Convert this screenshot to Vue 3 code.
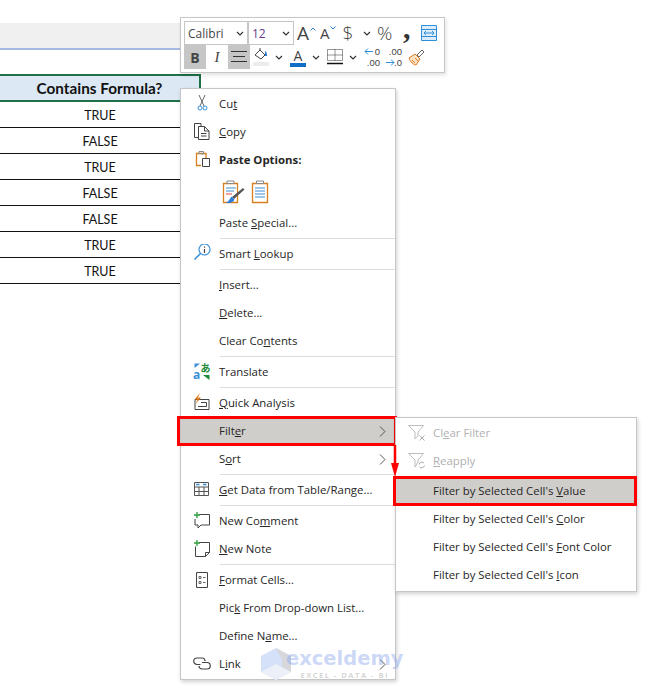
<script setup>
const rows = ['TRUE', 'FALSE', 'TRUE', 'FALSE', 'FALSE', 'TRUE', 'TRUE']

const ORANGE = '#d9801e'
const BLUE = '#3a8fd6'
const DARK = '#444'
const GREEN = '#2e9e3f'

// each part: path d, stroke, fill (or t for a text label)
const icons = {
  cut: [
    { d: 'M7 1l5 11M13 1L8 12', s: '#666' },
    { d: 'M6 14a2 2 0 1 0 4 0a2 2 0 1 0-4 0zM11 14a2 2 0 1 0 4 0a2 2 0 1 0-4 0z', s: BLUE }
  ],
  copy: [
    { d: 'M6 15.500H2.500V1.500h6.500v2.500', s: DARK },
    { d: 'M6.500 4.500h6l4.500 4.500v8.500H6.500zM12.500 4.500v4.500H17M9 11.500h5.500M9 14h5.500', s: DARK }
  ],
  paste: [
    { d: 'M9 15.500H4.500V3.500h9.500v5', s: ORANGE, w: 1.300 },
    { d: 'M7 3.500V1.500h4.500v2.500z', s: '#888' },
    { d: 'M10.500 8.500h7v8h-7z', s: DARK, f: '#fff' }
  ],
  lookup: [
    { d: 'M7 5.500a5.500 5.500 0 1 0 11 0a5.500 5.500 0 1 0-11 0z', s: BLUE, w: 1.200 },
    { d: 'M8.500 9.500L2.500 15.500', s: BLUE, w: 1.600 },
    { d: 'M12.500 5v4M12.500 2.500v1.300', s: DARK, w: 1.200 }
  ],
  translate: [
    { d: 'M8 1.500H2.500v4.500zM2 1.500l4 4', f: BLUE },
    { d: 'M11 13h6.500v5zM17.500 18l-4-4', f: '#1d8a3a' },
    { t: 'a', x: 1, y: 17, c: BLUE, z: 12 },
    { t: 'あ', x: 8.500, y: 10, c: '#1d8a3a', z: 10 }
  ],
  quick: [
    { d: 'M3 6.500h14v10H3zM9 9.500h5.500v4H6', s: DARK },
    { d: 'M8 0L2.500 6.500h3L3.500 11 9 4.500H6z', f: '#e87d1e' }
  ],
  table: [
    { d: 'M2.500 2.500h14v13h-14zM2.500 7h14M2.500 11.500h14M7 7v8.500M12 7v8.500', s: '#555' },
    { d: 'M4 4.500h3.500M11 4.500h3.500', s: BLUE, w: 1.500 }
  ],
  comment: [
    { d: 'M7 3.500h10.500v10.500H9l-3 3v-3H3v-6', s: DARK },
    { d: 'M5 1v6M2 4h6', s: GREEN, w: 1.300 }
  ],
  note: [
    { d: 'M7 3.500h10.500v10l-4 4h-10v-10M17.500 13.500h-4v4', s: DARK },
    { d: 'M5 1v6M2 4h6', s: GREEN, w: 1.300 }
  ],
  format: [
    { d: 'M4.500 2.500h11v15h-11z', s: DARK },
    { d: 'M7 6.500h2v2H7zM7 11.500h2v2H7zM11 7.500h2.500M11 12.500h2.500', s: '#666' }
  ],
  link: [
    { d: 'M8.500 10.500H5a3.250 3.250 0 0 1 0-6.500h5a3 3 0 0 1 3 3', s: DARK, w: 1.200 },
    { d: 'M10 8.500h5a3.250 3.250 0 0 1 0 6.500h-5a3 3 0 0 1-3-3', s: DARK, w: 1.200 }
  ],
  clearFilter: [
    { d: 'M1.500 2.500h15l-5.500 6.500v4l-3 3V9z', s: '#bdbdbd' },
    { d: 'M12.500 12.500l5 5M17.500 12.500l-5 5', s: '#a8a8a8' }
  ],
  reapply: [
    { d: 'M1.500 2.500h15l-5.500 6.500v2l-3 5V9z', s: '#bdbdbd' },
    { d: 'M12 13.500a3 3 0 0 1 5-1.500M17.500 14.500a3 3 0 0 1-5 1.500', s: '#a8a8a8' }
  ]
}

const L = (a, u, b = '') => ({ a, u, b })

const menu = [
  { ...L('Cu', 't'), icon: 'cut' },
  { ...L('', 'C', 'opy'), icon: 'copy' },
  { ...L('Paste Options:', ''), icon: 'paste', kind: 'head' },
  { kind: 'paste-row' },
  L('Paste ', 'S', 'pecial...'),
  { sep: true },
  { ...L('Smart ', 'L', 'ookup'), icon: 'lookup' },
  { sep: true },
  L('', 'I', 'nsert...'),
  L('', 'D', 'elete...'),
  L('Clear Co', 'n', 'tents'),
  { sep: true },
  { ...L('Translate', ''), icon: 'translate' },
  { sep: true },
  { ...L('', 'Q', 'uick Analysis'), icon: 'quick' },
  { ...L('Filt', 'e', 'r'), more: true, kind: 'boxed' },
  { ...L('S', 'o', 'rt'), more: true },
  { sep: true },
  { ...L('', 'G', 'et Data from Table/Range...'), icon: 'table' },
  { sep: true },
  { ...L('New Co', 'm', 'ment'), icon: 'comment' },
  { ...L('', 'N', 'ew Note'), icon: 'note' },
  { sep: true },
  { ...L('', 'F', 'ormat Cells...'), icon: 'format' },
  L('Pic', 'k', ' From Drop-down List...'),
  L('Define N', 'a', 'me...'),
  { ...L('L', 'i', 'nk'), icon: 'link', more: true }
]

const submenu = [
  { ...L('Cl', 'e', 'ar Filter'), icon: 'clearFilter', kind: 'off' },
  { ...L('', 'R', 'eapply'), icon: 'reapply', kind: 'off' },
  { gap: true },
  { ...L("Filter by Selected Cell's ", 'V', 'alue'), kind: 'boxed' },
  L("Filter by Selected Cell's ", 'C', 'olor'),
  L("Filter by Selected Cell's ", 'F', 'ont Color'),
  L("Filter by Selected Cell's ", 'I', 'con')
]
</script>

<template>
  <div class="sheet">
    <div class="ribbon-bar"></div>
    <table class="data">
      <thead>
        <tr><th>Contains Formula?</th></tr>
      </thead>
      <tbody>
        <tr v-for="(r, i) in rows" :key="i"><td>{{ r }}</td></tr>
      </tbody>
    </table>

    <!-- mini toolbar -->
    <div class="toolbar">
      <div class="tb-row">
        <div class="combo font-box"><span>Calibri</span><svg class="chev" viewBox="0 0 8 5"><path d="M1 1l3 3 3-3" /></svg></div>
        <div class="combo size-box"><span class="size">12</span><svg class="chev" viewBox="0 0 8 5"><path d="M1 1l3 3 3-3" /></svg></div>
        <span class="g-a big">A
          <svg class="caret" viewBox="0 0 6 4"><path d="M.5 3.500L3 1l2.500 2.500" /></svg>
        </span>
        <span class="g-a small">A
          <svg class="caret" viewBox="0 0 6 4"><path d="M.5.500L3 3 5.500.500" /></svg>
        </span>
        <span class="g-dollar">$</span>
        <svg class="chev solo" viewBox="0 0 8 5"><path d="M1 1l3 3 3-3" /></svg>
        <span class="g-pct">%</span>
        <span class="g-comma">,</span>
        <svg class="wrap" viewBox="0 0 16 16">
          <path d="M.5.500h15v15H.5z" fill="#dcecf9" stroke="#2f8fd8" />
          <path d="M.5 4.500h15M.5 11.500h15" stroke="#2f8fd8" fill="none" />
          <path d="M3 8h10M5 6L3 8l2 2M11 6l2 2-2 2" stroke="#2f8fd8" fill="none" />
        </svg>
      </div>
      <div class="tb-row second">
        <span class="btn on b">B</span>
        <span class="btn i">I</span>
        <span class="btn on">
          <svg width="16" height="14" viewBox="0 0 16 14"><path d="M0 1.500h16M2 6.500h12M0 11.500h16" stroke="#333" fill="none" /></svg>
        </span>
        <svg class="bucket" viewBox="0 0 16 20">
          <path d="M2 8l5-5 5 5-4 4z" fill="#fff" stroke="#444" />
          <path d="M7 1v3" stroke="#444" />
          <path d="M12 4c2 1 2 3 2 5h-2z" fill="#2f7ed8" />
          <path d="M0 15h16v4H0z" fill="#ececec" />
        </svg>
        <svg class="chev c1" viewBox="0 0 8 5"><path d="M1 1l3 3 3-3" /></svg>
        <span class="font-a">A</span>
        <svg class="chev c2" viewBox="0 0 8 5"><path d="M1 1l3 3 3-3" /></svg>
        <svg class="borders" viewBox="0 0 16 17">
          <path d="M.5.500h15v11H.5zM8 .5v11M.5 6h15" stroke="#333" stroke-dasharray="1 1" fill="none" />
          <path d="M0 14.500h16" stroke="#111" stroke-width="1.500" />
        </svg>
        <svg class="chev c3" viewBox="0 0 8 5"><path d="M1 1l3 3 3-3" /></svg>
        <span class="decimals dec">
          <span class="dec-top">0</span>
          <span>.00</span>
          <svg class="dec-arrow" viewBox="0 0 9 7"><path d="M9 3.500H1M4 .5l-3 3 3 3" /></svg>
        </span>
        <span class="decimals inc">
          <span>.00</span>
          <span>.0</span>
          <svg class="dec-arrow low" viewBox="0 0 9 7"><path d="M0 3.500h8M5 .5l3 3-3 3" /></svg>
        </span>
        <svg class="brush" viewBox="0 0 17 17">
          <path d="M1 9l6-4 5 5-4 6c-2 0-6-3-7-7z" fill="#fbe3c7" stroke="#e07b1a" />
          <path d="M4 11l3 3M7 9l3 3" stroke="#e07b1a" />
          <path d="M9 6l5-5 2 2-5 5z" fill="#fff" stroke="#666" />
        </svg>
      </div>
    </div>

    <!-- context menu -->
    <div class="menu">
      <template v-for="(m, i) in menu" :key="i">
        <div v-if="m.sep" class="sep"></div>
        <div v-else-if="m.kind === 'paste-row'" class="paste-row">
          <svg width="24" height="24" viewBox="0 0 24 24">
            <path d="M2.500 3.500h14v19h-14z" fill="#fff" stroke="#d9801e" stroke-width="1.300" />
            <path d="M6 3.500V1h7v2.500z" fill="#fff" stroke="#888" />
            <path d="M5 8h10M5 11h8" stroke="#3a8fd6" />
            <path d="M5 14h6" stroke="#e0453a" />
            <path d="M22 8l1.500 1.500L13 19l-2-2z" fill="#555" />
            <path d="M10.500 16.500l3 3c-1 3-5 4-9 3.500 3-1 4-4 6-6.500z" fill="#2f7ed8" />
          </svg>
          <svg width="18" height="24" viewBox="0 0 18 24">
            <path d="M1.500 3.500h15v19h-15z" fill="#fff" stroke="#d9801e" stroke-width="1.300" />
            <path d="M5.500 3.500V1h7v2.500z" fill="#fff" stroke="#888" />
            <path d="M4 8h10M4 11h10M4 14h10M4 17h10" stroke="#3a8fd6" />
          </svg>
        </div>
        <div v-else class="item" :class="m.kind">
          <svg v-if="m.icon" class="ico" viewBox="0 0 20 20">
            <template v-for="(p, j) in icons[m.icon]" :key="j">
              <text v-if="p.t" :x="p.x" :y="p.y" :fill="p.c" :font-size="p.z" class="ico-text">{{ p.t }}</text>
              <path v-else :d="p.d" :stroke="p.s || 'none'" :fill="p.f || 'none'" :stroke-width="p.w || 1" />
            </template>
          </svg>
          <span class="label">{{ m.a }}<u>{{ m.u }}</u>{{ m.b }}</span>
          <svg v-if="m.more" class="more" viewBox="0 0 7 11"><path d="M1 .5l5 5-5 5" /></svg>
        </div>
      </template>
    </div>

    <div class="submenu">
      <template v-for="(m, i) in submenu" :key="i">
        <div v-if="m.gap" class="sub-gap"></div>
        <div v-else class="item" :class="m.kind">
          <svg v-if="m.icon" class="ico" viewBox="0 0 20 20">
            <path v-for="(p, j) in icons[m.icon]" :key="j" :d="p.d" :stroke="p.s" fill="none" />
          </svg>
          <span class="label">{{ m.a }}<u>{{ m.u }}</u>{{ m.b }}</span>
        </div>
      </template>
    </div>

    <!-- red arrow from Filter to the sub item -->
    <svg class="arrow" width="10" height="33" viewBox="0 0 10 33">
      <path d="M5 0v19" stroke="#f00" stroke-width="2.500" />
      <path d="M1 18h8l-4 14z" fill="#f00" />
    </svg>

    <div class="watermark">
      <svg width="32" height="34" viewBox="0 0 32 34">
        <path d="M16 1L1 9v16l15 8 15-8V9z" fill="#d5e1f8" />
        <path d="M16 1l15 8v16l-9-5V13z" fill="#d8d8dc" />
        <path d="M1 25l15-8 15 8-15 8z" fill="#ecf1f9" />
      </svg>
      <div class="wm-text">
        <span class="wm-name">exceldemy</span>
        <span class="wm-tag">EXCEL - DATA - BI</span>
      </div>
    </div>
  </div>
</template>

<style scoped>
.sheet {
  position: relative;
  width: 664px;
  height: 694px;
  padding-top: 23px;
  box-sizing: border-box;
  background: #fff;
  overflow: hidden;
  font-family: "Open Sans", "Noto Sans", sans-serif;
  color: #262626;
}
.ribbon-bar {
  width: 200px;
  height: 25px;
  background: #f0f0f0;
  border-bottom: 2px solid #a6b9e2;
}
.data {
  width: 201px;
  margin-top: 24px;
  border-collapse: collapse;
  font-family: Lato, "Open Sans", sans-serif;
  color: #111;
}
.data th {
  height: 24px;
  padding: 0;
  background: #dce9f5;
  border: 2px solid #1f6f47;
  border-left: none;
  font-size: 15.300px;
  font-weight: 700;
  line-height: 18px;
  text-align: center;
}
.data td {
  height: 24px;
  padding: 1px 0 0;
  border-bottom: 1px solid #111;
  font-size: 12.500px;
  text-align: center;
}

.toolbar {
  position: absolute;
  left: 180px;
  top: 17px;
  width: 265px;
  height: 56px;
  padding: 3px 3px 0;
  box-sizing: border-box;
  background: #fff;
  border: 1px solid #c6c6c6;
  box-shadow: 1px 2px 4px rgba(0, 0, 0, .12);
  font-size: 12px;
}
.tb-row { display: flex; align-items: center; height: 24px; color: #444; }
.tb-row > * { flex: none; }
.combo {
  display: flex;
  align-items: center;
  justify-content: space-between;
  height: 24px;
  padding: 0 3px;
  box-sizing: border-box;
  border: 1px solid #c6c6c6;
}
.font-box { width: 64px; }
.size-box { width: 46px; }
.size { color: #6b3a8c; }
.chev { width: 8px; height: 5px; fill: none; stroke: #333; stroke-width: 1.200; }
.g-a { position: relative; line-height: 1; }
.g-a.big { font-size: 19px; margin-left: 3px; width: 22px; }
.g-a.small { font-size: 15px; margin-left: 1px; width: 22px; }
.caret {
  position: absolute;
  left: 13px;
  top: 3px;
  width: 6px;
  height: 4px;
  fill: none;
  stroke: #2f7ed8;
}
.g-a.small .caret { left: 10px; top: 0; }
.g-dollar { font-size: 19px; width: 12px; text-align: center; line-height: 1; font-weight: 300; }
.chev.solo { margin-left: 9px; }
.g-pct { font-size: 19px; margin-left: 6px; width: 18px; line-height: 1; font-weight: 300; }
.g-comma {
  width: 10px;
  height: 22px;
  margin-left: 8px;
  font-family: "Liberation Serif", serif;
  font-size: 30px;
  font-weight: 700;
  line-height: 12px;
  color: #333;
}
.wrap { width: 16px; height: 16px; margin-left: 8px; }
.btn {
  display: flex;
  align-items: center;
  justify-content: center;
  width: 22px;
  height: 24px;
  font-size: 14px;
}
.btn.on { background: #c6c6c6; }
.btn.b { font-weight: 700; }
.btn.i { font-family: "Liberation Serif", serif; font-style: italic; font-size: 15px; }
.bucket { width: 16px; height: 20px; margin-left: 3px; }
.c1 { margin-left: 6px; }
.font-a {
  width: 16px;
  height: 19px;
  margin-left: 7px;
  box-sizing: border-box;
  border-bottom: 4px solid #0f6fc6;
  font-size: 14px;
  line-height: 15px;
  text-align: center;
}
.c2 { margin-left: 6px; }
.borders { width: 16px; height: 17px; margin-left: 7px; }
.c3 { margin-left: 6px; }
.decimals {
  position: relative;
  display: flex;
  flex-direction: column;
  align-items: flex-end;
  width: 16px;
  font-family: "Liberation Sans", sans-serif;
  font-size: 9.500px;
  line-height: 11px;
  white-space: nowrap;
}
.dec-arrow {
  position: absolute;
  left: 0;
  top: 2px;
  width: 9px;
  height: 7px;
  fill: none;
  stroke: #2f8fd8;
}
.dec-arrow.low { top: 13px; }
.dec { margin-left: 7px; }
.inc { margin-left: 6px; }
.brush { width: 17px; height: 17px; margin-left: 6px; }

.menu, .submenu {
  position: absolute;
  box-sizing: border-box;
  background: #fff;
  border: 1px solid #c6c6c6;
  box-shadow: 1px 2px 4px rgba(0, 0, 0, .18);
  font-size: 11.400px;
}
.menu { left: 180px; top: 88px; width: 216px; height: 592px; padding-top: 1px; }
.submenu { left: 395px; top: 417px; width: 242px; height: 175px; padding-top: 1px; }
.item {
  position: relative;
  display: flex;
  align-items: center;
  height: 28px;
  padding-left: 38px;
  white-space: nowrap;
}
.label { margin-top: -2px; }
.ico { position: absolute; left: 11px; top: 4px; width: 20px; height: 20px; }
.ico-text { font-family: "Open Sans", "Noto Sans CJK JP", sans-serif; font-weight: 700; }
.more {
  position: absolute;
  right: 9px;
  top: 9px;
  width: 7px;
  height: 11px;
  fill: none;
  stroke: #555;
}
.head { height: 29px; font-weight: 700; }
.paste-row {
  display: flex;
  align-items: center;
  gap: 6px;
  height: 34px;
  padding-left: 40px;
}
.sep {
  height: 1px;
  margin: 1px 0 1px 39px;
  background: #dcdcdc;
}
.sub-gap { height: 2px; }
.boxed { background: #d0cecb; }
.boxed::after {
  content: "";
  position: absolute;
  inset: -1px -2px -1px -4px;
  border: 3px solid #f00;
  pointer-events: none;
}
.submenu .item { padding-left: 37px; }
.submenu .boxed::after { inset: -1px -1px -1px -3px; }
.off { color: #b0b0b0; }
.arrow { position: absolute; left: 390px; top: 445px; }
.watermark {
  position: absolute;
  left: 260px;
  top: 647px;
  display: flex;
  pointer-events: none;
}
.wm-text { display: flex; flex-direction: column; margin-left: -6px; }
.wm-name {
  font-family: "DejaVu Sans", sans-serif;
  font-weight: 700;
  font-size: 19.500px;
  line-height: 24px;
  color: rgba(130, 160, 235, .42);
}
.wm-tag {
  align-self: center;
  font-size: 7.500px;
  line-height: 9px;
  font-weight: 700;
  letter-spacing: 1.500px;
  color: rgba(120, 120, 120, .32);
  white-space: nowrap;
}
</style>

<style>
body { background: #fff; }
</style>
